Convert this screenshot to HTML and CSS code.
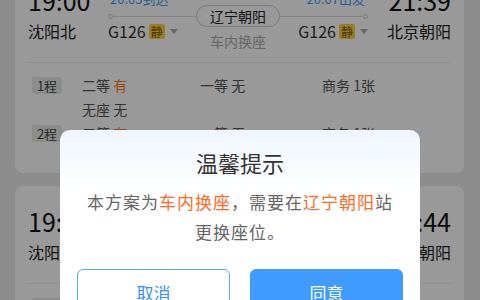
FILE: index.html
```html
<!DOCTYPE html>
<html lang="zh-CN">
<head>
    <meta charset="UTF-8">
    <meta name="viewport" content="width=device-width, initial-scale=1.0">
    <title>换乘方案</title>
    <link rel="stylesheet" href="styles.css">
</head>
<body>
    <div class="lista">
        <!-- primer plan -->
        <div class="tarjeta">
            <div class="viaje">
                <div class="extremo">
                    <div class="hora">19:00</div>
                    <div class="estacion">沈阳北</div>
                </div>
                <div class="ruta">
                    <div class="tramo">
                        <div class="etiqueta">20:05到达</div>
                        <div class="via"><i class="punto"></i><span class="linea"></span></div>
                        <div class="tren">G126<span class="jing">静</span><span class="flecha"></span></div>
                    </div>
                    <div class="cambio">
                        <div class="pastilla">辽宁朝阳</div>
                        <div class="nota">车内换座</div>
                    </div>
                    <div class="tramo tramo-der">
                        <div class="etiqueta">20:07出发</div>
                        <div class="via"><span class="linea"></span><i class="punto"></i></div>
                        <div class="tren">G126<span class="jing">静</span><span class="flecha"></span></div>
                    </div>
                </div>
                <div class="extremo extremo-der">
                    <div class="hora">21:39</div>
                    <div class="estacion">北京朝阳</div>
                </div>
            </div>
            <div class="separador"></div>
            <div class="asientos">
                <div class="tramo-fila">
                    <span class="num">1程</span>
                    <div class="rejilla">
                        <span>二等 <b class="hay">有</b></span>
                        <span>一等 无</span>
                        <span>商务 1张</span>
                        <span>无座 无</span>
                    </div>
                </div>
                <div class="tramo-fila">
                    <span class="num">2程</span>
                    <div class="rejilla">
                        <span>二等 <b class="hay">有</b></span>
                        <span>一等 无</span>
                        <span>商务 1张</span>
                        <span>无座 无</span>
                    </div>
                </div>
            </div>
        </div>

        <!-- segundo plan -->
        <div class="tarjeta">
            <div class="viaje">
                <div class="extremo">
                    <div class="hora">19:00</div>
                    <div class="estacion">沈阳北</div>
                </div>
                <div class="ruta">
                    <div class="tramo">
                        <div class="etiqueta">20:05到达</div>
                        <div class="via"><i class="punto"></i><span class="linea"></span></div>
                        <div class="tren">G126<span class="jing">静</span><span class="flecha"></span></div>
                    </div>
                    <div class="cambio">
                        <div class="pastilla">辽宁朝阳</div>
                        <div class="nota">同站换乘</div>
                    </div>
                    <div class="tramo tramo-der">
                        <div class="etiqueta">20:12出发</div>
                        <div class="via"><span class="linea"></span><i class="punto"></i></div>
                        <div class="tren">G394<span class="flecha"></span></div>
                    </div>
                </div>
                <div class="extremo extremo-der">
                    <div class="hora">21:44</div>
                    <div class="estacion">北京朝阳</div>
                </div>
            </div>
            <div class="separador"></div>
            <div class="asientos">
                <div class="tramo-fila">
                    <span class="num">1程</span>
                    <div class="rejilla">
                        <span>二等 <b class="hay">有</b></span>
                        <span>一等 无</span>
                        <span>商务 1张</span>
                    </div>
                </div>
            </div>
        </div>
    </div>

    <div class="mascara"></div>

    <div class="dialogo">
        <div class="titulo">温馨提示</div>
        <div class="texto">本方案为<span class="resalte">车内换座</span>，需要在<span class="resalte">辽宁朝阳</span>站<br>更换座位。</div>
        <div class="botones">
            <button class="boton boton-cancelar">取消</button>
            <button class="boton boton-aceptar">同意</button>
        </div>
    </div>
</body>
</html>
```

FILE: styles.css
```css
*{
    box-sizing: border-box;
}
html, body{
    height: 100%;
    overflow: hidden;
}
body{
    margin: 0;
    background-color: #ebebeb;
    font-family: "Noto Sans CJK SC", "Noto Sans", sans-serif;
    color: #333;
}
.lista{
    margin-top: -35px;
}
.tarjeta{
    background-color: #fff;
    border-radius: 8px;
    margin: 0 16px 13px 15px;
    padding: 20px 13px 4px;
}
.viaje{
    display: flex;
    align-items: flex-start;
}
.extremo{
    width: 80px;
}
.extremo-der{
    width: 83px;
    text-align: right;
}
.hora{
    font-size: 25px;
    line-height: 30px;
    color: #111;
}
.estacion{
    font-size: 16px;
    line-height: 22px;
    margin-top: 5px;
    color: #222;
}
.ruta{
    flex: 1;
    display: flex;
    align-items: flex-start;
}
.tramo{
    flex: 1;
    padding-top: 6px;
}
.tramo-der{
    text-align: right;
}
.etiqueta{
    font-size: 13px;
    line-height: 16px;
    color: #4a9cf6;
    padding-left: 2px;
}
.tramo-der .etiqueta{
    padding: 0 3px 0 0;
}
.via{
    height: 18px;
    display: flex;
    align-items: center;
}
.linea{
    flex: 1;
    height: 1px;
    background-color: #ddd;
}
.punto{
    width: 5px;
    height: 5px;
    border-radius: 50%;
    border: 1px solid #ccc;
    background-color: #fff;
}
.tren{
    font-size: 16px;
    line-height: 16px;
    margin-top: -2px;
    display: flex;
    align-items: center;
    color: #333;
}
.tramo-der .tren{
    justify-content: flex-end;
}
.jing{
    font-size: 12px;
    line-height: 15px;
    padding: 0 2px;
    margin-left: 3px;
    border-radius: 2px;
    background-color: #ffd43b;
    color: #7a5600;
}
.flecha{
    width: 0;
    height: 0;
    margin-left: 5px;
    border-left: 4px solid transparent;
    border-right: 4px solid transparent;
    border-top: 5px solid #aaa;
}
.cambio{
    margin-top: 20px;
    text-align: center;
}
.pastilla{
    height: 22px;
    line-height: 20px;
    font-size: 14px;
    padding: 0 13px;
    border: 1px solid #ccc;
    border-radius: 11px;
    color: #222;
}
.nota{
    margin-top: 6px;
    font-size: 14px;
    line-height: 16px;
    color: #aaa;
}
.separador{
    height: 1px;
    margin-top: 13px;
    background-color: #eee;
}
.asientos{
    padding-top: 10px;
}
.tramo-fila{
    display: flex;
    align-items: flex-start;
}
.num{
    width: 30px;
    height: 17px;
    margin: 4px 20px 0 4px;
    font-size: 13px;
    line-height: 17px;
    text-align: center;
    background-color: #eaeaea;
    border-radius: 2px;
    color: #444;
}
.rejilla{
    flex: 1;
    display: grid;
    grid-template-columns: 118px 122px 1fr;
    font-size: 14px;
    line-height: 24px;
    color: #555;
}
.hay{
    font-weight: normal;
    color: #ff7b1c;
}
.mascara{
    position: fixed;
    inset: 0;
    background-color: rgba(0, 0, 0, 0.4);
}
.dialogo{
    position: fixed;
    left: 60px;
    top: 130px;
    width: 360px;
    padding: 17px 17px 20px;
    border-radius: 10px;
    background: linear-gradient(#eef6fe, #fff 60px);
    text-align: center;
}
.titulo{
    font-size: 22px;
    line-height: 30px;
    color: #333;
}
.texto{
    margin-top: 10px;
    font-size: 17px;
    line-height: 30px;
    letter-spacing: 1px;
    color: #666;
}
.resalte{
    color: #ff6a26;
}
.botones{
    display: flex;
    gap: 20px;
    margin-top: 22px;
}
.boton{
    flex: 1;
    height: 46px;
    border-radius: 6px;
    font-family: inherit;
    font-size: 17px;
    border: 1px solid #5ea8f7;
}
.boton-cancelar{
    background-color: #fff;
    color: #3d90f0;
}
.boton-aceptar{
    background-color: #3f9bfd;
    border-color: #3f9bfd;
    color: #fff;
}
```
